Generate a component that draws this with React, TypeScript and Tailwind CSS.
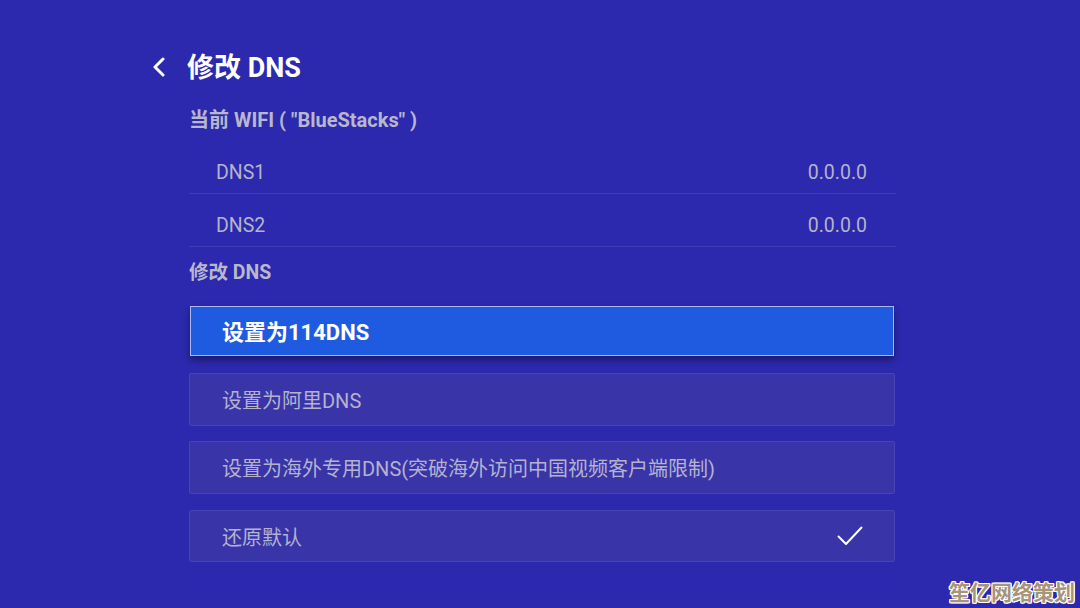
import React from "react";

const font = { fontFamily: '"Roboto", "Noto Sans CJK SC", sans-serif' };

const dnsRows = [
  { label: "DNS1", value: "0.0.0.0" },
  { label: "DNS2", value: "0.0.0.0" },
];

const options = [
  { text: "设置为阿里DNS", checked: false, gap: "mt-[17px]", h: "h-[53px]" },
  { text: "设置为海外专用DNS(突破海外访问中国视频客户端限制)", checked: false, gap: "mt-[15px]", h: "h-[53px]" },
  { text: "还原默认", checked: true, gap: "mt-[16px]", h: "h-[52px]" },
];

function Check() {
  return (
    <svg width="26" height="20" viewBox="0 0 26 20" fill="none">
      <polyline points="1.5,10.5 9,18 24.5,1.5" stroke="#ffffff" strokeWidth="2" strokeLinecap="round" strokeLinejoin="round" />
    </svg>
  );
}

export default function App() {
  return (
    <div className="relative w-[1080px] h-[608px] overflow-hidden bg-[#2c29ae] pt-[48px]" style={font}>
      {/* header */}
      <div className="flex items-center h-[38px] pl-[152px]">
        <svg width="14" height="20" viewBox="0 0 14 20" fill="none">
          <polyline points="11,2 3,10 11,18" stroke="#ffffff" strokeWidth="3" strokeLinecap="round" strokeLinejoin="round" />
        </svg>
        <span className="ml-[21px] pt-[2px] text-[27px] font-bold text-white leading-none">修改 DNS</span>
      </div>

      <div className="ml-[189px] w-[707px]">
        <div className="mt-[18px] h-[30px] flex items-center pt-[2px] text-[20px] font-bold text-[#b8b7cc]">
          当前 WIFI ( "BlueStacks" )
        </div>

        <div className="mt-[7px]">
          {dnsRows.map((r) => (
            <div
              key={r.label}
              className="h-[53px] flex justify-between pt-[20px] pl-[27px] pr-[29px] border-b border-[#3f3cba] text-[19.5px] leading-[24px] text-[#b5b3c9]"
            >
              <span>{r.label}</span>
              <span>{r.value}</span>
            </div>
          ))}
        </div>

        <div className="mt-[10px] h-[30px] flex items-center pt-[2px] text-[19.5px] font-bold text-[#b8b7cc]">修改 DNS</div>

        <div className="mt-[19px] ml-[1px] w-[704px] h-[50px] flex items-center pl-[31px] pt-[3px] bg-[#1f5be0] border border-[#a9b8f2] shadow-[0_4px_7px_rgba(0,0,0,0.4)] text-[22px] font-bold text-white">
          设置为114DNS
        </div>

        {options.map((o) => (
          <div
            key={o.text}
            className={`${o.gap} ${o.h} w-[706px] flex items-center justify-between pl-[32px] pr-[31px] bg-[#3935a8] border border-[#4844b6] rounded-[2px] text-[20px] text-[#b4b2cf]`}
          >
            <span className="pt-[3px]">{o.text}</span>
            {o.checked && <Check />}
          </div>
        ))}
      </div>

      <div className="absolute right-[5px] bottom-[4px] text-[21px] font-bold text-[#a89478] leading-none [text-shadow:1px_0_0_#fff,-1px_0_0_#fff,0_1px_0_#fff,0_-1px_0_#fff,1px_1px_0_#fff,-1px_-1px_0_#fff,1px_-1px_0_#fff,-1px_1px_0_#fff]">
        笙亿网络策划
      </div>
    </div>
  );
}
